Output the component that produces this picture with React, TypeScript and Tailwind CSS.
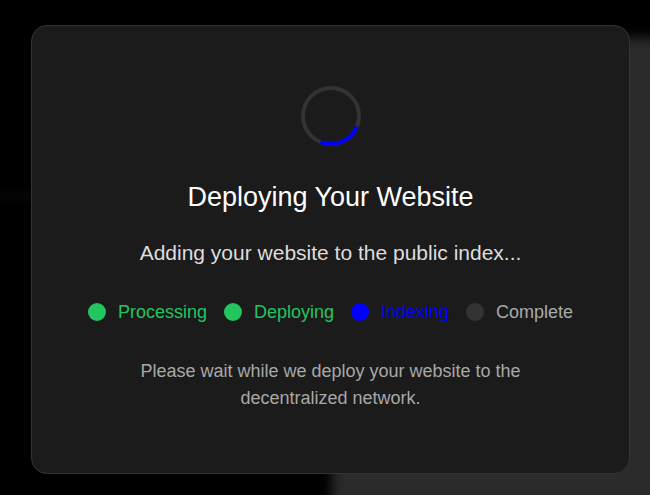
import React from "react";

function Spinner() {
  return (
    <svg width="60" height="60" viewBox="0 0 60 60" className="block">
      <circle cx="30" cy="30" r="28" fill="none" stroke="#333333" strokeWidth="4" />
      <path d="M55.96 40.49 A28 28 0 0 1 19.51 55.96" fill="none" stroke="#0000ff" strokeWidth="4" />
    </svg>
  );
}

function Step({ label, dot, text }: { label: string; dot: string; text: string }) {
  return (
    <div className="flex items-center gap-[12px]">
      <span className={`block h-[18px] w-[18px] rounded-full ${dot}`} />
      <span className={`text-[18px] leading-[24px] ${text}`}>{label}</span>
    </div>
  );
}

export default function App() {
  return (
    <div
      className="relative h-[495px] w-[650px] overflow-hidden bg-black"
      style={{ fontFamily: '"Liberation Sans", Arial, sans-serif' }}
    >
      <div className="absolute left-[332px] top-[38px] right-[-20px] bottom-[-20px] bg-[#2b2b2b] blur-[6px]" />
      <div className="absolute left-[-20px] top-[192px] w-[60px] h-[8px] bg-[#070707] blur-[3px]" />
      <div className="relative pt-[25px] pl-[31px]">
        <div className="flex h-[449px] w-[599px] flex-col items-center rounded-[16px] border border-[#333333] bg-[#1b1b1b] pt-[60px]">
          <Spinner />
          <h2 className="mt-[35px] text-[27px] leading-[32px] text-white">Deploying Your Website</h2>
          <p className="mt-[26px] text-[21px] leading-[28px] text-[#dddddd]">
            Adding your website to the public index...
          </p>
          <div className="mt-[33px] flex items-center gap-[17px]">
            <Step label="Processing" dot="bg-[#22c55e]" text="text-[#22c55e]" />
            <Step label="Deploying" dot="bg-[#22c55e]" text="text-[#22c55e]" />
            <Step label="Indexing" dot="bg-[#0000ff]" text="text-[#0000ff]" />
            <Step label="Complete" dot="bg-[#333333]" text="text-[#aaaaaa]" />
          </div>
          <p className="mt-[34px] max-w-[420px] text-center text-[18px] leading-[27px] text-[#a8a8a8]">
            Please wait while we deploy your website to the decentralized network.
          </p>
        </div>
      </div>
    </div>
  );
}
